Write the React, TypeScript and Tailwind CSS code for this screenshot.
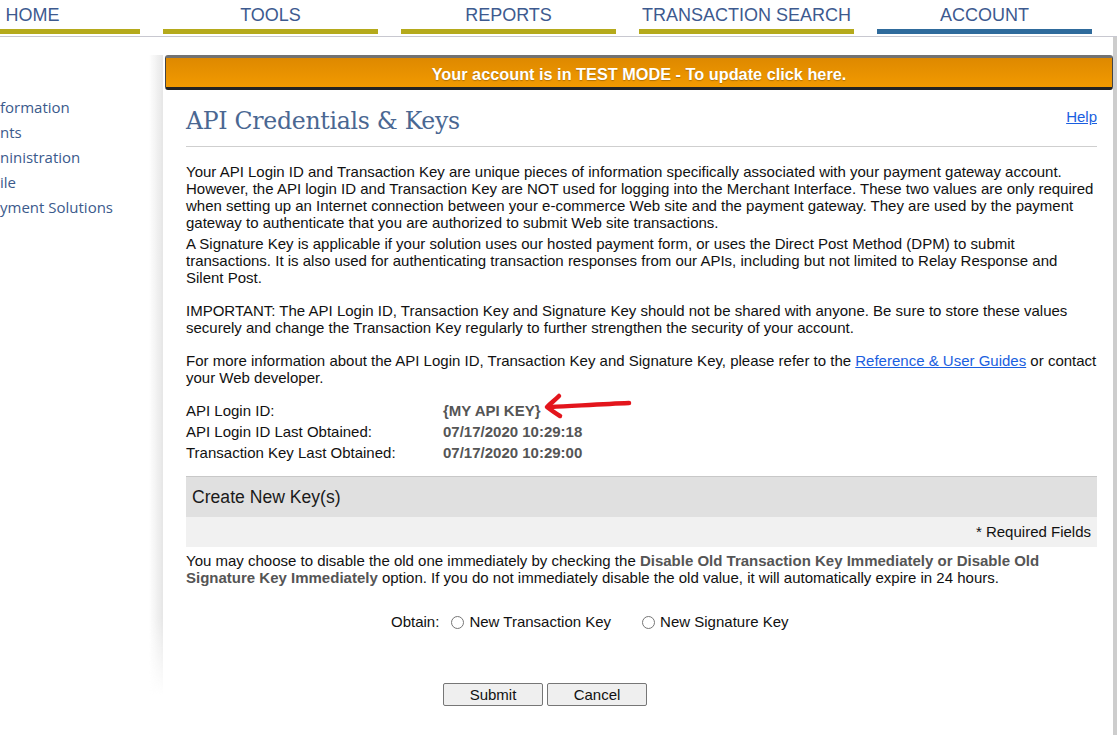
import React from "react";

const tabs = [
  { label: "HOME", active: false },
  { label: "TOOLS", active: false },
  { label: "REPORTS", active: false },
  { label: "TRANSACTION SEARCH", active: false },
  { label: "ACCOUNT", active: true },
];

const sideLinks = ["formation", "nts", "ninistration", "ile", "yment Solutions"];

function RedArrow() {
  return (
    <svg width="90" height="28" viewBox="0 0 90 28" className="absolute left-[100px] top-[-8px]">
      <path
        d="M8 15 C 30 14, 60 12, 86 11"
        stroke="#e3151c"
        strokeWidth="4.5"
        fill="none"
        strokeLinecap="round"
      />
      <path
        d="M16 4 C 12 8, 8 11, 4 15 C 8 18, 12 21, 17 24"
        stroke="#e3151c"
        strokeWidth="4.5"
        fill="none"
        strokeLinecap="round"
        strokeLinejoin="round"
      />
    </svg>
  );
}

function Radio({ label }: { label: string }) {
  return (
    <label className="flex items-center gap-[5px]">
      <span className="w-[13px] h-[13px] rounded-full border border-[#767676] bg-white" />
      <span>{label}</span>
    </label>
  );
}

export default function App() {
  return (
    <div className="relative w-[1117px] h-[735px] overflow-hidden bg-white font-['Liberation_Sans',Arial,sans-serif] text-[14px] text-[#111]">
      {/* top nav */}
      <div className="h-[37px] border-b border-[#c8c8d0] overflow-hidden">
        <div className="flex gap-[23px] ml-[-75px]">
          {tabs.map((t) => (
            <div key={t.label} className="w-[215px] shrink-0 flex flex-col items-center">
              <span className="h-[29px] leading-[30px] text-[18px] text-[#3d5a8f]">{t.label}</span>
              <span className={`w-full h-[5px] ${t.active ? "bg-[#2f6b9c]" : "bg-[#b5aa1c]"}`} />
            </div>
          ))}
        </div>
      </div>

      <div className="flex">
        {/* sidebar */}
        <div className="relative w-[163px] shrink-0 pt-[58px]">
          <div className="absolute right-0 top-[18px] w-[14px] h-[640px] bg-gradient-to-r from-transparent to-[#e6e6e6] [mask-image:linear-gradient(to_bottom,black_88%,transparent)]" />
          <ul className="font-['Open_Sans',sans-serif] text-[15px] text-[#3b5a8c]">
            {sideLinks.map((s) => (
              <li key={s} className="h-[25px] leading-[25px]">{s}</li>
            ))}
          </ul>
        </div>

        {/* main */}
        <div className="flex-1 pt-[18px] pr-[4px]">
          <div className="ml-[2px] h-[35px] pt-[3px] flex items-center justify-center rounded-[3px] border-t-[3px] border-t-[#727272] border-b-[3px] border-b-[#232323] border-x border-x-[#444] bg-gradient-to-b from-[#de8900] to-[#f29a00] text-white font-bold text-[16.3px] [text-shadow:0_1px_1px_rgba(0,0,0,0.25)]">
            Your account is in TEST MODE - To update click here.
          </div>

          <div className="pl-[23px] pr-[16px]">
            <div className="flex items-end justify-between h-[57px] pb-[12px] border-b border-[#cfcfcf]">
              <h1 className="font-['DejaVu_Serif',Georgia,serif] text-[23.6px] text-[#4a6792] leading-none tracking-[-0.3px]">
                API Credentials &amp; Keys
              </h1>
              <a className="self-start mt-[16px] text-[#1a5ee0] underline text-[15px]">Help</a>
            </div>

            <div className="leading-[17px] pt-[16px] text-[15px]">
              <p>
                Your API Login ID and Transaction Key are unique pieces of information specifically associated with your payment gateway account. However, the API login ID and Transaction Key are NOT used for logging into the Merchant Interface. These two values are only required when setting up an Internet connection between your e-commerce Web site and the payment gateway. They are used by the payment gateway to authenticate that you are authorized to submit Web site transactions.
              </p>
              <p className="mt-[4px]">
                A Signature Key is applicable if your solution uses our hosted payment form, or uses the Direct Post Method (DPM) to submit transactions. It is also used for authenticating transaction responses from our APIs, including but not limited to Relay Response and Silent Post.
              </p>
              <p className="mt-[16px]">
                IMPORTANT: The API Login ID, Transaction Key and Signature Key should not be shared with anyone. Be sure to store these values securely and change the Transaction Key regularly to further strengthen the security of your account.
              </p>
              <p className="mt-[16px]">
                For more information about the API Login ID, Transaction Key and Signature Key, please refer to the{" "}
                <a className="text-[#1a5ee0] underline">Reference &amp; User Guides</a> or contact your Web developer.
              </p>
            </div>

            <div className="mt-[14px] leading-[21px] text-[15px]">
              <div className="flex">
                <span className="w-[257px]">API Login ID:</span>
                <span className="relative font-bold text-[#555]">
                  {"{MY API KEY}"}
                  <RedArrow />
                </span>
              </div>
              <div className="flex">
                <span className="w-[257px]">API Login ID Last Obtained:</span>
                <span className="font-bold text-[#555]">07/17/2020 10:29:18</span>
              </div>
              <div className="flex">
                <span className="w-[257px]">Transaction Key Last Obtained:</span>
                <span className="font-bold text-[#555]">07/17/2020 10:29:00</span>
              </div>
            </div>

            <div className="mt-[13px] h-[41px] flex items-center pl-[6px] bg-[#e0e0e0] border-t border-[#c8c8c8] text-[17.6px] text-[#1a1a1a]">
              Create New Key(s)
            </div>
            <div className="h-[30px] flex items-center justify-end pr-[6px] bg-[#f1f1f1] text-[15px]">
              * Required Fields
            </div>

            <p className="mt-[5px] leading-[17px] text-[15px]">
              You may choose to disable the old one immediately by checking the{" "}
              <b className="text-[#555]">Disable Old Transaction Key Immediately or Disable Old Signature Key Immediately</b>{" "}
              option. If you do not immediately disable the old value, it will automatically expire in 24 hours.
            </p>

            <div className="mt-[25px] ml-[205px] flex items-center text-[15px]">
              <span className="mr-[12px]">Obtain:</span>
              <Radio label="New Transaction Key" />
              <span className="w-[31px]" />
              <Radio label="New Signature Key" />
            </div>

            <div className="mt-[49px] ml-[257px] flex gap-[4px]">
              <button className="w-[100px] h-[23px] rounded-[2px] border border-[#767676] bg-[#efefef] text-[15px]">Submit</button>
              <button className="w-[100px] h-[23px] rounded-[2px] border border-[#767676] bg-[#efefef] text-[15px]">Cancel</button>
            </div>
          </div>
        </div>
      </div>

      <div className="absolute right-0 top-[37px] w-[4px] h-[698px] bg-[#cdcdcd]" />
    </div>
  );
}
